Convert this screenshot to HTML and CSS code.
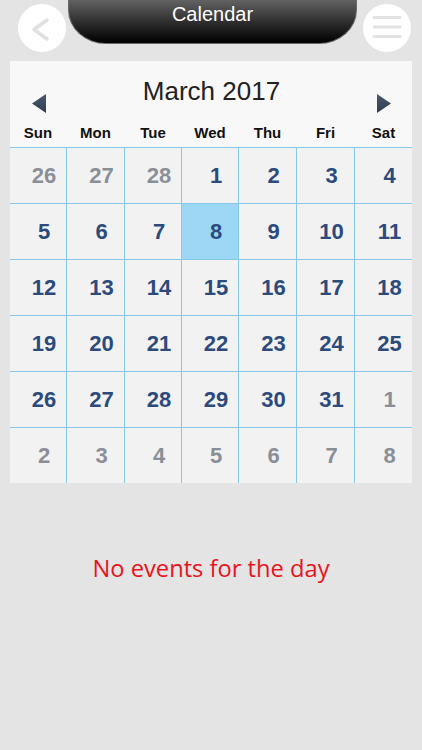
FILE: index.html
```html
<!DOCTYPE html>
<html>
<head>
<meta charset="utf-8">
<link rel="stylesheet" href="styles.css">
</head>
<body>
<div class="topbar">
  <div class="circle-btn back">
    <svg width="48" height="48" viewBox="0 0 48 48"><polyline points="29,16 16,25.5 29,35" fill="none" stroke="#e0e0e0" stroke-width="3.5" stroke-linecap="round" stroke-linejoin="round"/></svg>
  </div>
  <div class="pill">Calendar</div>
  <div class="circle-btn menu">
    <svg width="48" height="48" viewBox="0 0 48 48"><g stroke="#e2e2e2" stroke-width="3" stroke-linecap="round"><line x1="11" y1="13.5" x2="37" y2="13.5"/><line x1="11" y1="23" x2="37" y2="23"/><line x1="11" y1="32.5" x2="37" y2="32.5"/></g></svg>
  </div>
</div>

<div class="calendar">
  <div class="cal-head">
    <div class="month-row">
      <svg class="arrow" width="14" height="19" viewBox="0 0 14 19"><defs><linearGradient id="ag" x1="0" y1="0" x2="0" y2="1"><stop offset="0" stop-color="#4a5a70"/><stop offset="1" stop-color="#2f3c4f"/></linearGradient></defs><polygon points="14,0 0,9.5 14,19" fill="url(#ag)"/></svg>
      <div class="month-title">March 2017</div>
      <svg class="arrow" width="14" height="19" viewBox="0 0 14 19"><polygon points="0,0 14,9.5 0,19" fill="url(#ag)"/></svg>
    </div>
    <div class="dow-row">
      <div>Sun</div><div>Mon</div><div>Tue</div><div>Wed</div><div>Thu</div><div>Fri</div><div>Sat</div>
    </div>
  </div>
  <div class="grid">
    <div class="cell other">26</div><div class="cell other">27</div><div class="cell other">28</div><div class="cell">1</div><div class="cell">2</div><div class="cell">3</div><div class="cell">4</div>
    <div class="cell">5</div><div class="cell">6</div><div class="cell">7</div><div class="cell selected">8</div><div class="cell">9</div><div class="cell">10</div><div class="cell">11</div>
    <div class="cell">12</div><div class="cell">13</div><div class="cell">14</div><div class="cell">15</div><div class="cell">16</div><div class="cell">17</div><div class="cell">18</div>
    <div class="cell">19</div><div class="cell">20</div><div class="cell">21</div><div class="cell">22</div><div class="cell">23</div><div class="cell">24</div><div class="cell">25</div>
    <div class="cell">26</div><div class="cell">27</div><div class="cell">28</div><div class="cell">29</div><div class="cell">30</div><div class="cell">31</div><div class="cell other">1</div>
    <div class="cell other">2</div><div class="cell other">3</div><div class="cell other">4</div><div class="cell other">5</div><div class="cell other">6</div><div class="cell other">7</div><div class="cell other">8</div>
  </div>
</div>

<div class="no-events">No events for the day</div>
</body>
</html>
```

FILE: styles.css
```css
html, body {
  margin: 0;
  padding: 0;
}
body {
  background: #e4e4e4;
  width: 422px;
  height: 750px;
  overflow: hidden;
  font-family: "Liberation Sans", Arial, sans-serif;
}
.topbar {
  display: flex;
  align-items: flex-start;
  height: 57px;
  padding-left: 18px;
}
.circle-btn {
  width: 48px;
  height: 48px;
  border-radius: 50%;
  background: #ffffff;
  margin-top: 4px;
}
.circle-btn svg {
  display: block;
}
.pill {
  width: 287px;
  height: 43px;
  margin-left: 2px;
  margin-right: 6px;
  border: 1px solid #6a6a6a;
  border-top: none;
  border-radius: 0 0 38px 38px / 0 0 34px 34px;
  background: linear-gradient(#626262 0%, #2a2a2a 55%, #000 100%);
  color: #fff;
  font-size: 20px;
  line-height: 29px;
  text-align: center;
}
.calendar {
  margin: 4px 10px 0 10px;
  width: 402px;
}
.cal-head {
  background: #f8f8f8;
  padding: 15px 21px 5px 22px;
}
.month-row {
  display: flex;
  justify-content: space-between;
  align-items: flex-start;
  height: 37px;
}
.arrow {
  margin-top: 18px;
  display: block;
}
.month-title {
  font-size: 26px;
  line-height: 30px;
  color: #222;
}
.dow-row {
  display: grid;
  grid-template-columns: 56px 57px 56px 56px 57px 57px 57px;
  column-gap: 1px;
  margin: 11px -21px 0 -22px;
  font-weight: bold;
  font-size: 15px;
  line-height: 18px;
  color: #111;
  text-align: center;
}
.grid {
  display: grid;
  grid-template-columns: 56px 57px 56px 56px 57px 57px 57px;
  grid-auto-rows: 55px;
  gap: 1px;
  padding-top: 1px;
  background: #86c8e8;
}
.cell {
  background: #f2f2f2;
  display: flex;
  align-items: center;
  justify-content: center;
  padding-left: 12px;
  font-weight: bold;
  font-size: 22px;
  color: #2c4a7b;
}
.cell.other {
  color: #8a8f97;
}
.cell.selected {
  background: #9cd8f6;
}
.no-events {
  margin-top: 69px;
  text-align: center;
  font-family: "Open Sans", sans-serif;
  font-size: 23.7px;
  line-height: 32px;
  color: #e6141c;
}
```
